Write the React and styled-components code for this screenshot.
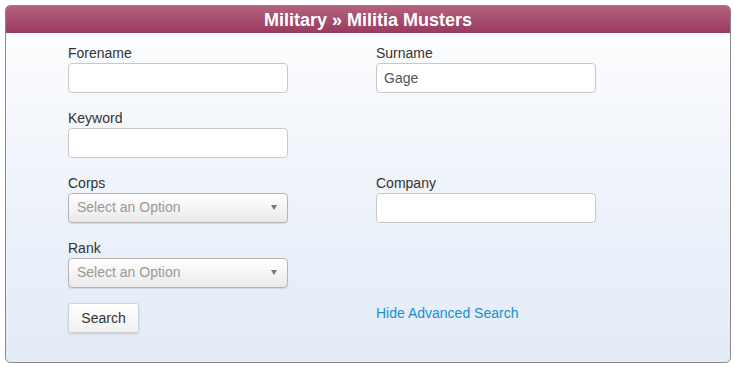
import React from 'react';
import styled, { createGlobalStyle } from 'styled-components';

const GlobalStyle = createGlobalStyle`
  body {
    margin: 0;
    background: #fff;
    font-family: "Liberation Sans", Arial, sans-serif;
  }
`;

const Page = styled.div`
  padding: 5px 4px 4px 5px;
`;

const Panel = styled.div`
  border: 1px solid #8a8a8a;
  border-radius: 5px;
  overflow: hidden;
  height: 358px;
  box-sizing: border-box;
  background: linear-gradient(to bottom, #ffffff 0%, #f2f5fb 40%, #e2ebf7 100%);
  display: flex;
  flex-direction: column;
`;

const Header = styled.div`
  height: 27px;
  background: linear-gradient(to bottom, #b3617e 0%, #9a3a60 100%);
  color: #fff;
  font-weight: bold;
  font-size: 18px;
  text-align: center;
  line-height: 28px;
`;

const Form = styled.div`
  display: grid;
  grid-template-columns: 220px 220px;
  column-gap: 88px;
  row-gap: 15px;
  padding: 10px 0 0 62px;
`;

const Field = styled.div`
  display: flex;
  flex-direction: column;
`;

const Label = styled.label`
  font-size: 14px;
  color: #333;
  height: 20px;
  line-height: 20px;
`;

const TextInput = styled.div`
  height: 30px;
  box-sizing: border-box;
  border: 1px solid #c8c8c8;
  border-radius: 4px;
  background: #fff;
  font-size: 14px;
  color: #555;
  padding: 0 7px;
  line-height: 28px;
`;

const Select = styled.div`
  height: 30px;
  box-sizing: border-box;
  border: 1px solid #b4b4b4;
  border-radius: 4px;
  background: linear-gradient(to bottom, #ffffff 0%, #f6f6f6 45%, #e9e9e9 100%);
  box-shadow: 0 1px 1px rgba(0, 0, 0, 0.1);
  font-size: 14px;
  color: #999;
  padding: 0 8px 2px;
  display: flex;
  align-items: center;
  justify-content: space-between;
`;

const Caret = styled.span`
  width: 0;
  height: 0;
  border-left: 3.5px solid transparent;
  border-right: 3.5px solid transparent;
  border-top: 5px solid #777;
  margin-right: 2px;
`;

const Actions = styled.div`
  padding-top: 0;
`;

const Button = styled.button`
  font-family: "Liberation Sans", Arial, sans-serif;
  font-size: 14px;
  color: #333;
  width: 71px;
  height: 30px;
  border: 1px solid #d2d2d2;
  border-radius: 3px;
  background: linear-gradient(to bottom, #ffffff 0%, #f1f1f1 100%);
  box-shadow: 0 1px 2px rgba(0, 0, 0, 0.15);
  padding: 0;
`;

const LinkText = styled.a`
  font-size: 14px;
  color: #1a8fd0;
  text-decoration: none;
  display: block;
  line-height: 20px;
`;

const Select2 = ({ placeholder }) => (
  <Select>
    <span>{placeholder}</span>
    <Caret />
  </Select>
);

export default function App() {
  return (
    <>
      <GlobalStyle />
      <Page>
        <Panel>
          <Header>Military » Militia Musters</Header>
          <Form>
            <Field>
              <Label>Forename</Label>
              <TextInput />
            </Field>
            <Field>
              <Label>Surname</Label>
              <TextInput>Gage</TextInput>
            </Field>
            <Field>
              <Label>Keyword</Label>
              <TextInput />
            </Field>
            <div />
            <Field>
              <Label>Corps</Label>
              <Select2 placeholder="Select an Option" />
            </Field>
            <Field>
              <Label>Company</Label>
              <TextInput />
            </Field>
            <Field>
              <Label>Rank</Label>
              <Select2 placeholder="Select an Option" />
            </Field>
            <div />
            <Actions>
              <Button>Search</Button>
            </Actions>
            <Actions>
              <LinkText href="#">Hide Advanced Search</LinkText>
            </Actions>
          </Form>
        </Panel>
      </Page>
    </>
  );
}
